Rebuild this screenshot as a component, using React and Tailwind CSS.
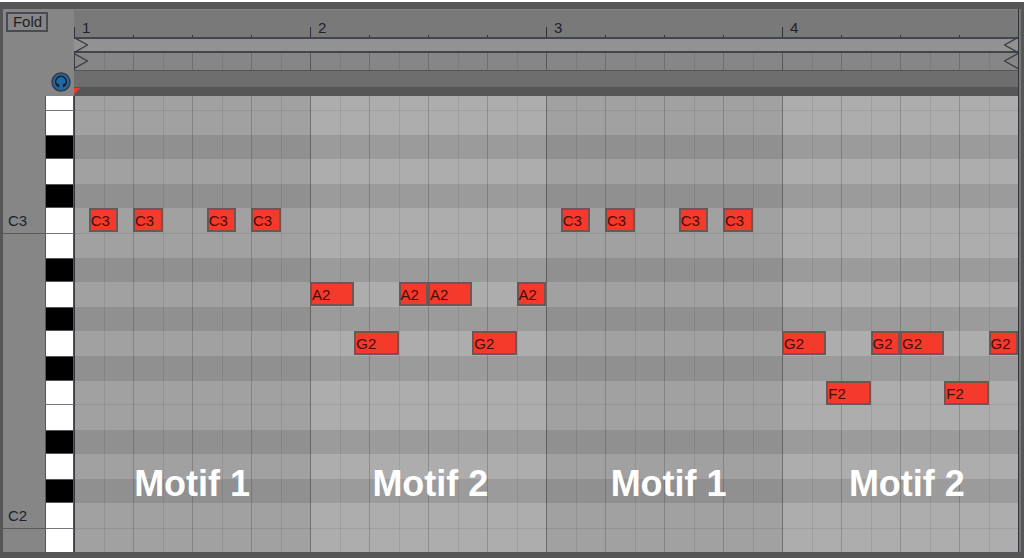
const ROWS = [
    { pitch: 'F3', height: 'h-[15px]', divider: true },
    { pitch: 'E3', height: 'h-6' },
    { pitch: 'D#3', height: 'h-6', black: true },
    { pitch: 'D3', height: 'h-[25px]' },
    { pitch: 'C#3', height: 'h-6', black: true },
    { pitch: 'C3', height: 'h-[26px]', divider: true, octave: true },
    { pitch: 'B2', height: 'h-6' },
    { pitch: 'A#2', height: 'h-6', black: true },
    { pitch: 'A2', height: 'h-[25px]' },
    { pitch: 'G#2', height: 'h-6', black: true },
    { pitch: 'G2', height: 'h-[25px]' },
    { pitch: 'F#2', height: 'h-[25px]', black: true },
    { pitch: 'F2', height: 'h-6', divider: true },
    { pitch: 'E2', height: 'h-[25px]' },
    { pitch: 'D#2', height: 'h-6', black: true },
    { pitch: 'D2', height: 'h-[25px]' },
    { pitch: 'C#2', height: 'h-6', black: true },
    { pitch: 'C2', height: 'h-[26px]', divider: true, octave: true },
    { pitch: 'B1', height: 'h-[23px]' },
];

// start and length are in sixteenths
const NOTES = [
    { pitch: 'C3', start: 1, length: 2 },
    { pitch: 'C3', start: 4, length: 2 },
    { pitch: 'C3', start: 9, length: 2 },
    { pitch: 'C3', start: 12, length: 2 },
    { pitch: 'A2', start: 16, length: 3 },
    { pitch: 'G2', start: 19, length: 3 },
    { pitch: 'A2', start: 22, length: 2 },
    { pitch: 'A2', start: 24, length: 3 },
    { pitch: 'G2', start: 27, length: 3 },
    { pitch: 'A2', start: 30, length: 2 },
    { pitch: 'C3', start: 33, length: 2 },
    { pitch: 'C3', start: 36, length: 2 },
    { pitch: 'C3', start: 41, length: 2 },
    { pitch: 'C3', start: 44, length: 2 },
    { pitch: 'G2', start: 48, length: 3 },
    { pitch: 'F2', start: 51, length: 3 },
    { pitch: 'G2', start: 54, length: 2 },
    { pitch: 'G2', start: 56, length: 3 },
    { pitch: 'F2', start: 59, length: 3 },
    { pitch: 'G2', start: 62, length: 2 },
];

const BARS = [1, 2, 3, 4];
const EIGHTHS = [0, 1, 2, 3, 4, 5, 6, 7];
const STEPS = 64;

const lineColor = (bar, i) => {
    if (i === 0) return bar === 1 ? 'border-[#3a3c46]' : 'border-black/35';
    return i % 2 ? 'border-black/8' : 'border-black/18';
};

const BeatLines = () => (
    <div className="absolute inset-0 grid grid-cols-4">
        {BARS.map((bar) => (
            <div key={bar} className="grid grid-cols-8">
                {EIGHTHS.map((i) => (
                    <div key={i} className={`border-l ${lineColor(bar, i)}`} />
                ))}
            </div>
        ))}
    </div>
);

const LoopMarkers = () => (
    <div className="relative flex h-full justify-between">
        <svg width="14" height="16" viewBox="0 0 14 16" fill="none" stroke="#3c3e46" strokeWidth="1.4">
            <path d="M0 0.5 L13.5 8 L0 15.5" />
        </svg>
        <svg width="14" height="16" viewBox="0 0 14 16" fill="none" stroke="#3c3e46" strokeWidth="1.4">
            <path d="M14 0.5 L0.5 8 L14 15.5" />
        </svg>
    </div>
);

const Ruler = () => (
    <div className="grid h-7 grid-cols-4 border-t border-[#868686] bg-[#797979]">
        {BARS.map((bar) => (
            <div key={bar} className="relative grid grid-cols-4 items-end">
                <div className="h-[10px] border-l border-[#2f313a]" />
                <div className="h-[2px] border-l border-[#2f313a]" />
                <div className="h-[2px] border-l border-[#2f313a]" />
                <div className="h-[2px] border-l border-[#2f313a]" />
                <span className="absolute bottom-0 left-2 text-[15px] leading-[18px] text-[#20222b]">{bar}</span>
            </div>
        ))}
    </div>
);

const Sidebar = () => (
    <div className="w-[71px] shrink-0 bg-[#868686]">
        <div className="flex h-[87px] flex-col justify-between pl-[3px] pt-[3px]">
            <button className="h-5 w-[42px] border-2 border-[#484a54] pl-px text-[15px] leading-4 text-[#20222b]">Fold</button>
            <button aria-label="Preview" className="mr-[3px] mb-1 self-end rounded-full">
                <svg className="block" width="20" height="20" viewBox="0 0 20 20">
                    <circle cx="10" cy="10" r="9" fill="#2368a2" stroke="#343c46" strokeWidth="1.5" />
                    <path d="M6.2 13.6 A5.4 5.4 0 1 1 13.8 13.6" fill="none" stroke="#17232e" strokeWidth="1.5" />
                    <path d="M5.2 11 L8.2 12.2 V15.6 L6.3 14.8Z M14.8 11 L11.8 12.2 V15.6 L13.7 14.8Z" fill="#17232e" />
                </svg>
            </button>
        </div>
        {ROWS.map((row) => (
            <div key={row.pitch} className={`flex ${row.height}`}>
                <div className={`flex flex-1 items-center pl-[5px] pt-[2px] text-[15px] text-[#20222b] ${row.octave ? 'border-b border-[#5a5a5a]' : ''}`}>
                    {row.octave && row.pitch}
                </div>
                <div
                    className={`w-[29px] border-x border-x-[#555555] ${row.black ? 'border-y border-y-[#555555] bg-black' : 'bg-white'} ${row.divider ? 'border-b border-b-[#777777]' : ''}`}
                />
            </div>
        ))}
    </div>
);

const Note = ({ note }) => (
    <div
        className="absolute top-0 flex h-6 items-center border-2 border-[#6e5654] bg-[#f5392b] text-[15px] leading-none text-[#4a0d0a]"
        style={{ left: `${(note.start / STEPS) * 100}%`, width: `${(note.length / STEPS) * 100}%` }}
    >
        {note.pitch}
    </div>
);

const NoteGrid = () => (
    <div className="relative">
        <div className="absolute inset-0 grid grid-cols-4">
            {BARS.map((bar) => (
                <div key={bar} className={bar % 2 ? 'bg-[#a1a1a1]' : 'bg-[#adadad]'} />
            ))}
        </div>
        <BeatLines />
        {ROWS.map((row) => (
            <div
                key={row.pitch}
                className={`relative ${row.height} ${row.black ? 'bg-black/10' : ''} ${row.divider ? 'border-b border-black/8' : ''}`}
            >
                {NOTES.filter((n) => n.pitch === row.pitch).map((n) => (
                    <Note key={n.start} note={n} />
                ))}
            </div>
        ))}
        <div className="absolute -right-2 bottom-12 -left-px grid grid-cols-4 text-center text-4xl font-bold text-white">
            {BARS.map((bar) => (
                <span key={bar}>Motif {bar % 2 ? 1 : 2}</span>
            ))}
        </div>
    </div>
);

const App = () => {
    return (
        <main className="border-y-2 border-white bg-[#565656] pt-[7px] pr-[3px] pb-[6px] pl-[3px] font-['Liberation_Sans',Arial,sans-serif]">
            <div className="flex border-r-2 border-[#777777]">
                <Sidebar />
                <div className="min-w-0 flex-1 border-r border-[#30343c]">
                    <Ruler />
                    <div className="h-4 border-y-2 border-[#42444e] bg-[#929292]">
                        <div className="-my-[2px] h-4">
                            <LoopMarkers />
                        </div>
                    </div>
                    <div className="relative h-[17px] bg-[#868686]">
                        <BeatLines />
                        <LoopMarkers />
                    </div>
                    <div className="h-[17px] border-t border-[#555555] bg-[#6e6e6e]" />
                    <div className="h-[9px] bg-[#565656]">
                        <svg width="7" height="8" viewBox="0 0 7 8">
                            <path d="M0 1 H6 L0 7Z" fill="#f5392b" />
                        </svg>
                    </div>
                    <NoteGrid />
                </div>
            </div>
        </main>
    );
};

export default App;
